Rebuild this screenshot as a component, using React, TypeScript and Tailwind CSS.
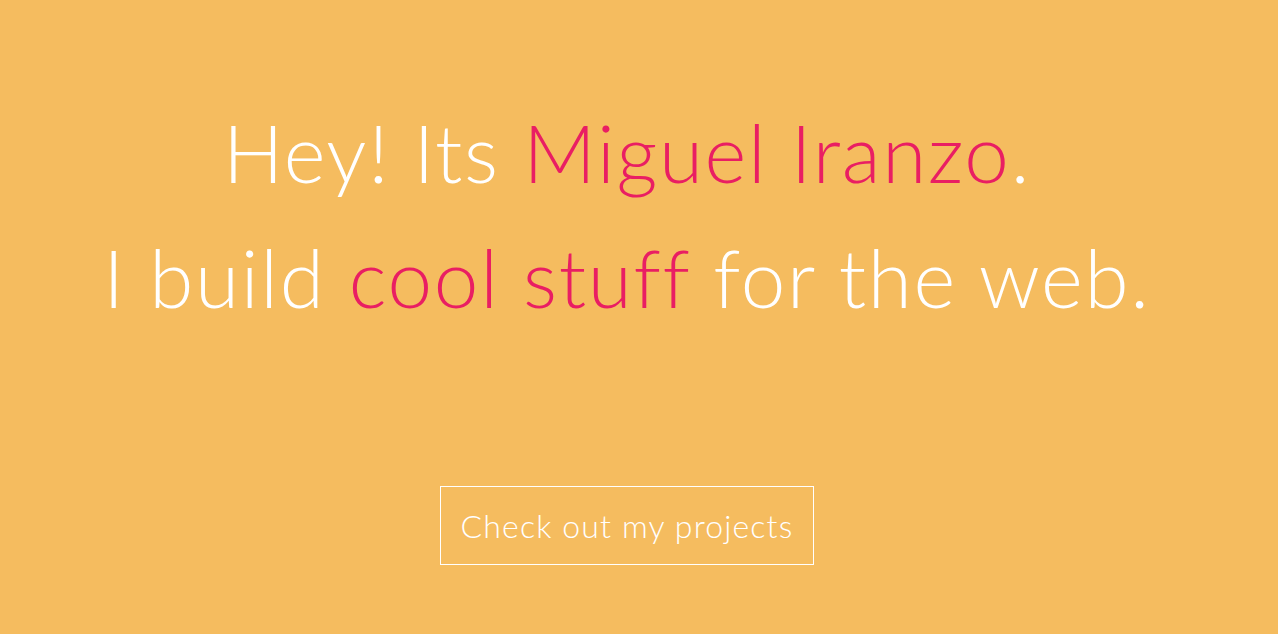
export default function App() {
  return (
    <div
      className="w-full h-[634px] bg-[#f5bc5f] flex flex-col items-center pr-[24px] text-white"
      style={{ fontFamily: "Lato, 'Open Sans', sans-serif" }}
    >
      <h1 className="mt-[90px] text-center text-[80px] leading-[125px] font-light tracking-[1.7px]">
        <span>Hey! Its </span>
        <span className="text-[#e91e63]">Miguel Iranzo</span>
        <span>.</span>
        <br />
        <span>I build </span>
        <span className="text-[#e91e63]">cool stuff</span>
        <span> for the web.</span>
      </h1>
      <button className="mt-[146px] w-[374px] h-[79px] border border-white text-[32px] font-light tracking-[1.15px] text-white">
        Check out my projects
      </button>
    </div>
  );
}
